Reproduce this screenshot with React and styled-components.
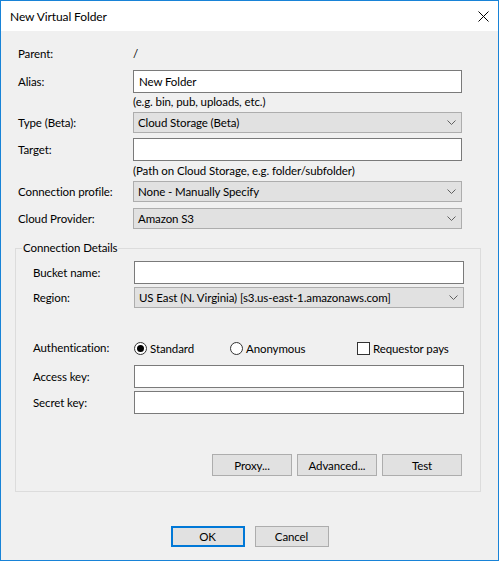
import styled, { createGlobalStyle } from 'styled-components'

const GlobalStyle = createGlobalStyle`
   html, body {
      margin: 0;
      padding: 0;
      background: #ffffff;
   }
   * {
      box-sizing: border-box;
   }
`

const Window = styled.div`
   width: 499px;
   height: 561px;
   border: 1px solid #1883d7;
   display: flex;
   flex-direction: column;
   font-family: Lato, "Noto Sans", sans-serif;
   font-size: 11.5px;
   letter-spacing: -0.1px;
   color: #000;
   background: #f0f0f0;
`

const TitleBar = styled.div`
   height: 30px;
   background: #fff;
   display: flex;
   align-items: center;
   justify-content: space-between;
   padding: 0 9px 0 9px;
`

const Title = styled.span`
   font-size: 12px;
`

const Content = styled.div`
   flex: 1;
   padding: 11px 17px 0 17px;
   display: flex;
   flex-direction: column;
`

const Row = styled.div`
   display: flex;
   align-items: center;
   margin-top: ${p => p.$mt || 0}px;
   min-height: ${p => p.$h || 0}px;
`

const Label = styled.div`
   width: ${p => p.$w || 115}px;
   flex-shrink: 0;
   line-height: 14px;
`

const Hint = styled.div`
   margin-left: ${p => p.$left || 115}px;
   margin-top: ${p => p.$mt || 0}px;
   line-height: 13px;
   height: 13px;
`

const TextBox = styled.input`
   width: ${p => p.$w || 329}px;
   height: 23px;
   border: 1px solid #7a7a7a;
   background: #fff;
   font-family: inherit;
   font-size: inherit;
   letter-spacing: inherit;
   padding: 0 5px;
   margin: 0;
   outline: none;
   color: #000;
`

const Combo = styled.div`
   width: ${p => p.$w || 329}px;
   height: 21px;
   border: 1px solid #adadad;
   background: #e1e1e1;
   display: flex;
   align-items: center;
   justify-content: space-between;
   padding: 0 5px 0 4px;
`

const Group = styled.fieldset`
   margin: 12px 0 0 -3px;
   width: 466px;
   border: 1px solid #dcdcdc;
   padding: 6px 16px 15px 17px;
   display: flex;
   flex-direction: column;
   min-width: 0;
`

const Legend = styled.legend`
   padding: 0 1px;
   margin-left: -11px;
   line-height: 14px;
`

const Choice = styled.label`
   display: flex;
   align-items: center;
   gap: 3px;
   width: ${p => p.$w}px;
   flex-shrink: 0;
`

const Radio = styled.span`
   width: 13px;
   height: 13px;
   border-radius: 50%;
   border: 1px solid #333;
   background: #fff;
   display: flex;
   align-items: center;
   justify-content: center;
   &::after {
      content: '';
      width: 7px;
      height: 7px;
      border-radius: 50%;
      background: ${p => (p.$checked ? '#000' : 'transparent')};
   }
`

const Check = styled.span`
   width: 13px;
   height: 13px;
   border: 1px solid #333;
   background: #fff;
`

const ButtonRow = styled.div`
   display: flex;
   justify-content: ${p => p.$justify || 'flex-end'};
   gap: ${p => p.$gap || 5}px;
   margin-top: ${p => p.$mt || 0}px;
   padding-right: ${p => p.$pr || 0}px;
`

const Button = styled.button`
   width: ${p => p.$w || 80}px;
   height: ${p => p.$h || 22}px;
   background: #e1e1e1;
   border: ${p => (p.$default ? '2px solid #0078d7' : '1px solid #adadad')};
   font-family: inherit;
   font-size: inherit;
   letter-spacing: inherit;
   color: #000;
   padding: 0;
   margin: 0;
`

function Chevron() {
    return (
        <svg width="9" height="5" viewBox="0 0 9 5">
            <polyline points="0.5,0.5 4.5,4.5 8.5,0.5" fill="none" stroke="#606060" strokeWidth="1" />
        </svg>
    )
}

function CloseIcon() {
    return (
        <svg width="11" height="11" viewBox="0 0 11 11">
            <path d="M0.5 0.5 L10.5 10.5 M10.5 0.5 L0.5 10.5" stroke="#000" strokeWidth="1" />
        </svg>
    )
}

function ComboBox({ value, w }) {
    return (
        <Combo $w={w}>
            <span>{value}</span>
            <Chevron />
        </Combo>
    )
}

export default function App() {
    return (
        <>
            <GlobalStyle />
            <Window>
                <TitleBar>
                    <Title>New Virtual Folder</Title>
                    <CloseIcon />
                </TitleBar>
                <Content>
                    <Row $h={23}>
                        <Label>Parent:</Label>
                        <span>/</span>
                    </Row>
                    <Row $mt={5}>
                        <Label>Alias:</Label>
                        <TextBox defaultValue="New Folder" />
                    </Row>
                    <Hint $mt={2}>(e.g. bin, pub, uploads, etc.)</Hint>
                    <Row $mt={4}>
                        <Label>Type (Beta):</Label>
                        <ComboBox value="Cloud Storage (Beta)" />
                    </Row>
                    <Row $mt={5}>
                        <Label>Target:</Label>
                        <TextBox />
                    </Row>
                    <Hint $mt={3}>(Path on Cloud Storage, e.g. folder/subfolder)</Hint>
                    <Row $mt={4}>
                        <Label>Connection profile:</Label>
                        <ComboBox value="None - Manually Specify" />
                    </Row>
                    <Row $mt={6}>
                        <Label>Cloud Provider:</Label>
                        <ComboBox value="Amazon S3" />
                    </Row>

                    <Group>
                        <Legend>Connection Details</Legend>
                        <Row>
                            <Label $w={101}>Bucket name:</Label>
                            <TextBox $w={330} />
                        </Row>
                        <Row $mt={3}>
                            <Label $w={101}>Region:</Label>
                            <ComboBox w={330} value="US East (N. Virginia) [s3.us-east-1.amazonaws.com]" />
                        </Row>
                        <Row $mt={32} $h={16}>
                            <Label $w={101}>Authentication:</Label>
                            <Choice $w={96}>
                                <Radio $checked />
                                Standard
                            </Choice>
                            <Choice $w={127}>
                                <Radio />
                                Anonymous
                            </Choice>
                            <Choice>
                                <Check />
                                Requestor pays
                            </Choice>
                        </Row>
                        <Row $mt={9}>
                            <Label $w={101}>Access key:</Label>
                            <TextBox $w={330} />
                        </Row>
                        <Row $mt={3}>
                            <Label $w={101}>Secret key:</Label>
                            <TextBox $w={330} />
                        </Row>
                        <ButtonRow $mt={40} $pr={2}>
                            <Button>Proxy...</Button>
                            <Button>Advanced...</Button>
                            <Button>Test</Button>
                        </ButtonRow>
                    </Group>

                    <ButtonRow $mt={34} $justify="center" $gap={10}>
                        <Button $w={74} $h={21} $default>OK</Button>
                        <Button $w={74} $h={21}>Cancel</Button>
                    </ButtonRow>
                </Content>
            </Window>
        </>
    )
}
